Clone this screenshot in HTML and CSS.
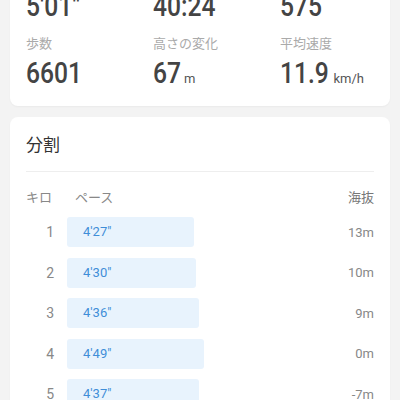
FILE: index.html
```html
<!DOCTYPE html>
<html>

<head>
    <meta charset="UTF-8">
    <title>ワークアウト詳細</title>
    <link rel="stylesheet" href="styles.css">
</head>

<body>
    <div class="page">
        <div class="card summary">
            <div class="stats">
                <div class="stat">
                    <div class="label">平均ペース</div>
                    <div class="value"><span class="num">5'01"</span></div>
                </div>
                <div class="stat">
                    <div class="label">時間</div>
                    <div class="value"><span class="num">40:24</span></div>
                </div>
                <div class="stat">
                    <div class="label">カロリー</div>
                    <div class="value"><span class="num">575</span></div>
                </div>
                <div class="stat">
                    <div class="label">歩数</div>
                    <div class="value"><span class="num">6601</span></div>
                </div>
                <div class="stat">
                    <div class="label">高さの変化</div>
                    <div class="value"><span class="num">67</span><span class="unit">m</span></div>
                </div>
                <div class="stat">
                    <div class="label">平均速度</div>
                    <div class="value"><span class="num">11.9</span><span class="unit wide">km/h</span></div>
                </div>
            </div>
        </div>

        <div class="card splits">
            <div class="title">分割</div>
            <div class="head">
                <span class="km">キロ</span>
                <span class="pace">ペース</span>
                <span class="alt">海抜</span>
            </div>
            <div class="rows">
                <div class="row">
                    <span class="km">1</span>
                    <span class="pace"><span class="bar" style="width: 127px">4'27"</span></span>
                    <span class="alt">13m</span>
                </div>
                <div class="row">
                    <span class="km">2</span>
                    <span class="pace"><span class="bar" style="width: 129px">4'30"</span></span>
                    <span class="alt">10m</span>
                </div>
                <div class="row">
                    <span class="km">3</span>
                    <span class="pace"><span class="bar" style="width: 132px">4'36"</span></span>
                    <span class="alt">9m</span>
                </div>
                <div class="row">
                    <span class="km">4</span>
                    <span class="pace"><span class="bar" style="width: 137px">4'49"</span></span>
                    <span class="alt">0m</span>
                </div>
                <div class="row">
                    <span class="km">5</span>
                    <span class="pace"><span class="bar" style="width: 132px">4'37"</span></span>
                    <span class="alt">-7m</span>
                </div>
            </div>
        </div>
    </div>
</body>

</html>
```

FILE: styles.css
```css
body {
    margin: 0;
    background: #f3f3f3;
    font-family: Roboto, "Noto Sans CJK JP", sans-serif;
    color: #333;
}

.page {
    padding: 0 10px;
}

.card {
    background: #fff;
    border-radius: 8px;
    box-shadow: 0 1px 2px rgba(0, 0, 0, 0.04);
    padding: 16px;
    margin-bottom: 11px;
}

.summary {
    margin-top: -48px;
    padding-bottom: 16px;
}

.stats {
    display: grid;
    grid-template-columns: 127px 127px 1fr;
    row-gap: 12px;
}

.label {
    font-size: 13px;
    line-height: 18px;
    color: #aaa;
}

.value {
    margin-top: 3px;
    height: 34px;
    line-height: 34px;
    color: #444;
    white-space: nowrap;
}

/* the app uses a condensed face, squeeze Roboto to match */
.num {
    display: inline-block;
    font-size: 29px;
    font-weight: 500;
    transform: scaleX(0.85);
    transform-origin: left center;
}

.unit {
    font-size: 13px;
    margin-left: -2px;
    color: #555;
}

.unit.wide {
    margin-left: -4px;
}

.title {
    font-size: 17px;
    line-height: 24px;
    color: #333;
    padding-bottom: 14px;
    border-bottom: 1px solid #eeeeee;
}

.head,
.row {
    display: flex;
    align-items: center;
}

.head {
    margin-top: 17px;
    font-size: 13px;
    line-height: 18px;
    color: #888;
}

.head .km {
    width: 49px;
}

.head .pace {
    flex: 1;
}

.head .alt {
    color: #777;
}

.rows {
    margin-top: 10px;
    display: flex;
    flex-direction: column;
    gap: 10.5px;
}

.row {
    height: 30px;
    font-size: 13px;
}

.row .km {
    width: 28px;
    text-align: right;
    font-size: 14px;
    color: #888;
    margin-right: 13px;
}

.row .pace {
    flex: 1;
}

.bar {
    display: block;
    box-sizing: border-box;
    height: 30px;
    line-height: 30px;
    padding-left: 16px;
    background: #e8f3fd;
    border-radius: 3px;
    color: #3f8ed8;
}

.row .alt {
    color: #888;
}
```
